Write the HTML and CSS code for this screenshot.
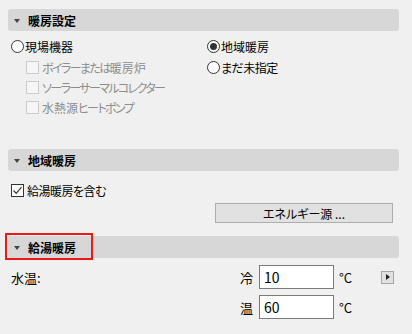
FILE: index.html
```html
<!DOCTYPE html>
<html lang="ja">
<head>
<meta charset="utf-8">
<link rel="stylesheet" href="styles.css">
</head>
<body>
<div class="panel">
  <div class="section-header"><span class="tri"></span><span class="title">暖房設定</span></div>
  <div class="options">
    <div class="col">
      <div class="row first"><span class="radio"></span><span>現場機器</span></div>
      <div class="row sub"><span class="check disabled"></span><span class="muted"><span class="k">ボイラーまたは</span>暖房炉</span></div>
      <div class="row sub"><span class="check disabled"></span><span class="muted"><span class="k">ソーラーサーマルコレクター</span></span></div>
      <div class="row sub"><span class="check disabled"></span><span class="muted">水熱源<span class="k">ヒートポンプ</span></span></div>
    </div>
    <div class="col">
      <div class="row first"><span class="radio on"></span><span>地域暖房</span></div>
      <div class="row"><span class="radio"></span><span class="kana">まだ未指定</span></div>
    </div>
  </div>

  <div class="section-header s2"><span class="tri"></span><span class="title">地域暖房</span></div>
  <div class="row cb-row"><span class="check checked"><svg width="11" height="11" viewBox="0 0 11 11"><path d="M1.5 5.5 L4.2 8.3 L9.5 2.2" fill="none" stroke="#333" stroke-width="1.2"/></svg></span><span class="kana">給湯暖房を含む</span></div>
  <div class="btn-row"><div class="btn">エネルギー源 ...</div></div>

  <div class="section-header s3 marked"><span class="tri"></span><span class="title">給湯暖房</span></div>
  <div class="temps">
    <div class="t-label">水温:</div>
    <div class="t-name">冷</div>
    <div class="field">10</div>
    <div class="unit">°C</div>
    <div class="arrow-btn"><span class="arr"></span></div>
    <div></div>
    <div class="t-name">温</div>
    <div class="field">60</div>
    <div class="unit">°C</div>
    <div></div>
  </div>
</div>
</body>
</html>
```

FILE: styles.css
```css
html, body {
  margin: 0;
  padding: 0;
  background: #f0f0f0;
}
body {
  font-family: "Noto Sans CJK JP", "Noto Sans", sans-serif;
  font-size: 12px;
  font-feature-settings: "palt";
  color: #000;
  width: 412px;
  height: 334px;
  overflow: hidden;
}
.panel {
  padding: 9px 13px 0 8px;
}
.section-header {
  position: relative;
  height: 22px;
  background: #d7d7d7;
  border-radius: 3px;
  display: flex;
  align-items: center;
  padding-left: 6px;
  box-sizing: border-box;
}
.tri {
  width: 0;
  height: 0;
  border-left: 3px solid transparent;
  border-right: 3px solid transparent;
  border-top: 4px solid #444;
  margin-right: 8px;
  margin-top: 1px;
}
.title {
  font-weight: bold;
  font-size: 12px;
  font-feature-settings: normal;
}
.marked::after {
  content: "";
  position: absolute;
  left: -3px;
  top: -3px;
  width: 84px;
  height: 23px;
  border: 2px solid #f21616;
}
.options {
  display: grid;
  grid-template-columns: 196px 1fr;
  margin-top: 5px;
}
.row {
  height: 20px;
  display: flex;
  align-items: center;
  white-space: nowrap;
}
.row.first {
  height: 21px;
}
.col .row {
  padding-left: 3px;
}
.col .row.sub {
  padding-left: 18px;
}
.radio {
  width: 13px;
  height: 13px;
  box-sizing: border-box;
  border: 1px solid #333;
  border-radius: 50%;
  background: #fff;
  margin-right: 1px;
  display: flex;
  align-items: center;
  justify-content: center;
  flex: none;
}
.radio.on::after {
  content: "";
  width: 7px;
  height: 7px;
  border-radius: 50%;
  background: #333;
}
.check {
  width: 13px;
  height: 13px;
  box-sizing: border-box;
  border: 1px solid #333;
  background: #fff;
  margin-right: 3px;
  display: flex;
  align-items: center;
  justify-content: center;
  flex: none;
}
.check.disabled {
  border-color: #cccccc;
  background: #f6f6f6;
}
.muted {
  color: #8d8d8d;
}
.k {
  letter-spacing: -1.6px;
}
.kana {
  letter-spacing: -0.5px;
}
.s2 {
  margin-top: 32px;
}
.cb-row {
  margin-top: 9px;
  padding-left: 3px;
}
.btn-row {
  display: flex;
  justify-content: flex-end;
  margin-top: 3px;
  padding-right: 6px;
}
.btn {
  width: 178px;
  height: 20px;
  box-sizing: border-box;
  border: 1px solid #adadad;
  background: #e1e1e1;
  display: flex;
  align-items: center;
  justify-content: center;
  font-size: 12px;
}
.s3 {
  margin-top: 13px;
}
.temps {
  display: grid;
  grid-template-columns: 1fr auto 75px 47px 13px;
  grid-auto-rows: 24px;
  row-gap: 6px;
  align-items: center;
  margin-top: 7px;
  padding-right: 5px;
}
.t-label {
  padding-left: 3px;
  font-size: 13px;
}
.t-name {
  margin-right: 6px;
  font-size: 13px;
}
.field {
  height: 24px;
  box-sizing: border-box;
  border: 1px solid #7a7a7a;
  background: #fff;
  padding-left: 4px;
  font-size: 14px;
  display: flex;
  align-items: center;
}
.unit {
  padding-left: 5px;
  font-size: 13px;
}
.arrow-btn {
  width: 13px;
  height: 13px;
  box-sizing: border-box;
  border: 1px solid #a5a5a5;
  background: #e1e1e1;
  display: flex;
  align-items: center;
  justify-content: center;
}
.arr {
  width: 0;
  height: 0;
  border-top: 3.5px solid transparent;
  border-bottom: 3.5px solid transparent;
  border-left: 4px solid #222;
  margin-left: 1px;
}
```
